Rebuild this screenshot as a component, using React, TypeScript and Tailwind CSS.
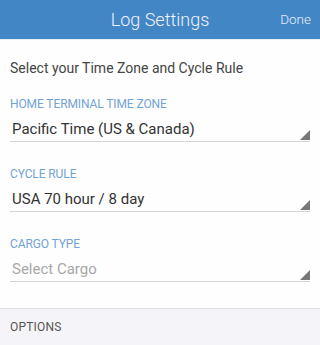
import React from "react";

function Field({ label, value, placeholder }: { label: string; value: string; placeholder?: boolean }) {
  return (
    <div className="px-[10px]">
      <div className="text-[12px] leading-[14px] text-[#72a3d6] tracking-[-0.1px]">{label}</div>
      <div className="relative mt-[7px] border-b border-[#d4d2d6] h-[24px]">
        <div className={`pl-[2px] pt-[1px] text-[15px] leading-[20px] ${placeholder ? "text-[#a8a8a8]" : "text-[#333]"}`}>{value}</div>
        <svg className="absolute right-0 bottom-[1px]" width="10" height="10" viewBox="0 0 10 10">
          <polygon points="10,0 10,10 0,10" fill="#777" />
        </svg>
      </div>
    </div>
  );
}

export default function App() {
  return (
    <div className="w-[320px] h-[345px] bg-white overflow-hidden" style={{ fontFamily: "Roboto, 'Noto Sans', sans-serif" }}>
      <div className="relative h-[39px] bg-[#4386c6] flex items-center justify-center">
        <div className="text-[18px] text-[#f0f4fa] font-light leading-none">Log Settings</div>
        <div className="absolute right-[9px] top-0 h-full flex items-center text-[13.5px] text-[#e6eef8] font-light">Done</div>
      </div>
      <div className="h-px bg-[#e8eef6]" />
      <div className="bg-[#fefefe]">
        <div className="px-[10px] pt-[19px] text-[14px] leading-[18px] text-[#444]">Select your Time Zone and Cycle Rule</div>
        <div className="pt-[20px] flex flex-col gap-[25px]">
          <Field label="HOME TERMINAL TIME ZONE" value="Pacific Time (US & Canada)" />
          <Field label="CYCLE RULE" value="USA 70 hour / 8 day" />
          <Field label="CARGO TYPE" value="Select Cargo" placeholder />
        </div>
        <div className="h-[26px]" />
      </div>
      <div className="border-t border-[#dcdbe0] bg-[#f5f4f8] h-[37px] flex items-center px-[10px]">
        <div className="text-[12px] text-[#555] tracking-[0.2px]">OPTIONS</div>
      </div>
      <div className="h-px bg-[#dcdbe0]" />
    </div>
  );
}
